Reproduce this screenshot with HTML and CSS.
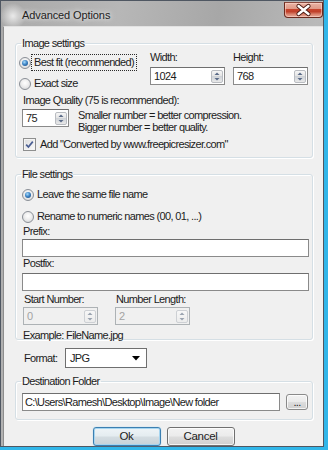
FILE: index.html
```html
<!DOCTYPE html>
<html>
<head>
<meta charset="utf-8">
<title>Advanced Options</title>
<link rel="stylesheet" href="styles.css">
</head>
<body>
<div class="window">
  <div class="titlebar">
    <span class="title">Advanced Options</span>
    <div class="close">
      <svg width="39" height="16" viewBox="0 0 39 16">
        <path d="M14.5 4 L24.5 12 M24.5 4 L14.5 12" stroke="#4a1a12" stroke-width="4.2" stroke-linecap="round"/>
        <path d="M14.5 4 L24.5 12 M24.5 4 L14.5 12" stroke="#ffffff" stroke-width="2.4" stroke-linecap="round"/>
      </svg>
    </div>
  </div>
  <div class="client">
    <fieldset class="group g1">
      <legend>Image settings</legend>
      <div class="size-row">
        <div class="radios">
          <div class="opt"><span class="radio checked"></span><span class="txt focus">Best fit (recommended)</span></div>
          <div class="opt"><span class="radio"></span><span class="txt">Exact size</span></div>
        </div>
        <div class="field">
          <div class="lbl">Width:</div>
          <div class="spin"><span class="val">1024</span><span class="spinbtn"><svg width="10" height="11" viewBox="0 0 10 11"><path d="M2.5 4 L5 1.5 L7.5 4Z" fill="#5a6b88"/><path d="M2.5 7 L5 9.5 L7.5 7Z" fill="#5a6b88"/></svg></span></div>
        </div>
        <div class="field">
          <div class="lbl">Height:</div>
          <div class="spin"><span class="val">768</span><span class="spinbtn"><svg width="10" height="11" viewBox="0 0 10 11"><path d="M2.5 4 L5 1.5 L7.5 4Z" fill="#5a6b88"/><path d="M2.5 7 L5 9.5 L7.5 7Z" fill="#5a6b88"/></svg></span></div>
        </div>
      </div>
      <div class="lbl quality-lbl">Image Quality (75 is recommended):</div>
      <div class="quality-row">
        <div class="spin quality"><span class="val">75</span><span class="spinbtn"><svg width="10" height="11" viewBox="0 0 10 11"><path d="M2.5 4 L5 1.5 L7.5 4Z" fill="#5a6b88"/><path d="M2.5 7 L5 9.5 L7.5 7Z" fill="#5a6b88"/></svg></span></div>
        <div class="hint">
          <div>Smaller number = better compression.</div>
          <div>Bigger number = better quality.</div>
        </div>
      </div>
      <div class="check-row">
        <span class="checkbox"><svg width="11" height="11" viewBox="0 0 11 11"><path d="M2.2 5.6 L4.4 8 L8.8 2.6" fill="none" stroke="#4a5e93" stroke-width="1.7"/></svg></span>
        <span>Add "Converted by www.freepicresizer.com"</span>
      </div>
    </fieldset>

    <fieldset class="group g2">
      <legend>File settings</legend>
      <div class="opt first"><span class="radio checked"></span><span class="txt">Leave the same file name</span></div>
      <div class="opt second"><span class="radio"></span><span class="txt">Rename to numeric names (00, 01, ...)</span></div>
      <div class="lbl">Prefix:</div>
      <div class="textbox prefix"></div>
      <div class="lbl">Postfix:</div>
      <div class="textbox postfix"></div>
      <div class="num-row">
        <div class="field">
          <div class="lbl">Start Number:</div>
          <div class="spin disabled"><span class="val">0</span><span class="spinbtn"><svg width="10" height="11" viewBox="0 0 10 11"><path d="M2.5 4 L5 1.5 L7.5 4Z" fill="#9aa3b0"/><path d="M2.5 7 L5 9.5 L7.5 7Z" fill="#9aa3b0"/></svg></span></div>
        </div>
        <div class="field">
          <div class="lbl">Number Length:</div>
          <div class="spin disabled"><span class="val">2</span><span class="spinbtn"><svg width="10" height="11" viewBox="0 0 10 11"><path d="M2.5 4 L5 1.5 L7.5 4Z" fill="#9aa3b0"/><path d="M2.5 7 L5 9.5 L7.5 7Z" fill="#9aa3b0"/></svg></span></div>
        </div>
      </div>
      <div class="example">Example: FileName.jpg</div>
    </fieldset>

    <div class="format-row">
      <span class="format-lbl">Format:</span>
      <div class="select"><span>JPG</span><svg width="8" height="5" viewBox="0 0 8 5"><path d="M0 0 L8 0 L4 4.5Z" fill="#000"/></svg></div>
    </div>

    <fieldset class="group g3">
      <legend>Destination Folder</legend>
      <div class="dest-row">
        <div class="textbox path">C:\Users\Ramesh\Desktop\Image\New folder</div>
        <div class="btn browse">...</div>
      </div>
    </fieldset>

    <div class="buttons">
      <div class="btn main default">Ok</div>
      <div class="btn main">Cancel</div>
    </div>
  </div>
</div>
</body>
</html>
```
FILE: styles.css
```css
* { box-sizing: border-box; }
html, body { margin: 0; padding: 0; }
body {
  width: 328px;
  height: 450px;
  overflow: hidden;
  background: #31b6e9;
  font-family: "Liberation Sans", Arial, sans-serif;
  font-size: 11px;
  line-height: 13px;
  letter-spacing: -0.65px;
  color: #1c1c1c;
}
.window {
  width: 324px;
  height: 447px;
  border: 1px solid #4f5762;
  padding-left: 2px;
  display: flex;
  flex-direction: column;
  background:
    radial-gradient(circle at 12px 15px, rgba(255,255,255,0.75), rgba(255,255,255,0) 13px),
    linear-gradient(100deg, #a9a9a9 0%, #b7b7b7 30%, #a7a7a7 55%, #b9b9b9 80%, #a6a6a6 100%);
}
.titlebar {
  height: 25px;
  flex: none;
  display: flex;
  justify-content: space-between;
  align-items: flex-start;
}
.title {
  margin: 8px 0 0 19px;
  font-size: 11px;
  letter-spacing: -0.1px;
  color: #222;
  text-shadow: 0 0 4px rgba(255,255,255,0.9), 0 0 8px rgba(255,255,255,0.6);
}
.close {
  width: 39px;
  height: 16px;
  margin-top: 1px;
  border: 1px solid #6b2a1e;
  border-top-color: #8a4a3e;
  border-radius: 0 0 4px 4px;
  background: linear-gradient(#eab3a4 0%, #e09a88 40%, #c8442c 45%, #c0402a 62%, #d9826d 80%, #e6a898 100%);
  box-shadow: inset 0 0 0 1px rgba(255,220,210,0.55);
  display: flex;
  align-items: center;
  justify-content: center;
  overflow: hidden;
}
.close svg { flex: none; }
.client {
  flex: 1;
  background: #f0f0f0;
  border-left: 1px solid #8d8d8d;
  border-top: 1px solid #e2e2e2;
  padding-top: 10px;
  display: flex;
  flex-direction: column;
}
.group {
  margin: 0 10px 0 11px;
  padding: 0 4px 6px 7px;
  border: 1px solid #d5dfe5;
  border-radius: 3px;
  box-shadow: inset 1px 1px 0 #fff, 1px 1px 0 #fff;
  min-width: 0;
}
.group legend {
  padding: 0 1px;
  margin-left: -2px;
  line-height: 13px;
}
.lbl { line-height: 13px; white-space: nowrap; }

/* radios */
.opt { display: flex; align-items: center; height: 17px; }
.radio {
  flex: none;
  width: 12px;
  height: 12px;
  border-radius: 50%;
  border: 1px solid #8a8f96;
  background: radial-gradient(circle at 50% 40%, #ffffff 0%, #f0f0f0 40%, #cfd1d4 100%);
  display: flex;
  align-items: center;
  justify-content: center;
}
.radio.checked::after {
  content: "";
  width: 6px;
  height: 6px;
  border-radius: 50%;
  background: radial-gradient(circle at 40% 35%, #a9dcfb 0%, #3f86c7 45%, #153f72 100%);
}
.txt {
  height: 17px;
  line-height: 15px;
  padding: 0 2px;
  border: 1px dotted transparent;
  white-space: nowrap;
}
.txt.focus { border-color: #2a2a2a; }

/* group 1 */
.size-row {
  display: grid;
  grid-template-columns: 1fr 75px 75px;
  column-gap: 8px;
}
.radios { padding-top: 4px; margin-left: -4px; display: flex; flex-direction: column; gap: 4px; }
.size-row .field { padding-top: 1px; }
.size-row .spin { margin-top: 3px; }

.spin {
  height: 18px;
  border: 1px solid #8a8a8a;
  border-top-color: #6e6e6e;
  background: #fff;
  display: flex;
  align-items: center;
  justify-content: space-between;
  padding: 0 1px 0 3px;
}
.spin .val { line-height: 13px; }
.spinbtn {
  flex: none;
  width: 12px;
  height: 13px;
  border: 1px solid #b9bcc1;
  border-radius: 2px;
  background: linear-gradient(#f6f6f6, #e3e3e3 48%, #cfd3d8 50%, #e9e9e9);
  display: flex;
  align-items: center;
  justify-content: center;
}
.spin.disabled { background: #f0f0f0; border-color: #adb2b5; color: #a3a3a3; }
.spin.disabled .spinbtn { border-color: #cdd0d4; background: linear-gradient(#f7f7f7, #ececec); }

.quality-lbl { margin-top: 2px; }
.quality-row { display: flex; margin-top: 2px; }
.spin.quality { width: 47px; margin-left: -1px; flex: none; }
.hint { margin-left: 9px; line-height: 12px; }
.check-row { display: flex; align-items: center; margin-top: 5px; height: 13px; }
.checkbox {
  flex: none;
  width: 13px;
  height: 13px;
  border: 1px solid #8e8f8f;
  background: linear-gradient(135deg, #dcdcdc, #fbfbfb);
  box-shadow: inset 0 0 0 1px #f4f4f4;
  margin-right: 4px;
  display: flex;
  align-items: center;
  justify-content: center;
}

/* group 2 */
.g2 { margin-top: 10px; padding-right: 3px; padding-bottom: 0; }
.g2 .opt { margin-left: -1px; margin-top: 5px; }
.textbox {
  height: 18px;
  border: 1px solid #8a8a8a;
  border-top-color: #6e6e6e;
  background: #fff;
  margin-left: -1px;
}
.prefix { margin-top: 1px; }
.postfix { margin-top: 3px; }
.num-row {
  display: grid;
  grid-template-columns: 75px 75px;
  column-gap: 17px;
  margin-top: 2px;
}
.num-row .lbl { padding-left: 1px; }
.num-row .spin { margin-top: 1px; }
.example { margin-top: 4px; margin-bottom: -3px; line-height: 13px; }

/* format */
.format-row { display: flex; align-items: center; margin: 8px 0 0 20px; height: 20px; }
.format-lbl { width: 41px; flex: none; }
.select {
  width: 82px;
  height: 20px;
  border: 1px solid #6f6f6f;
  background: #fff;
  display: flex;
  align-items: center;
  justify-content: space-between;
  padding: 0 6px 0 4px;
}

/* destination */
.g3 { margin-top: 7px; padding-bottom: 8px; }
.dest-row { display: flex; align-items: center; margin-top: 5px; }
.path {
  width: 258px;
  flex: none;
  line-height: 16px;
  padding-left: 2px;
  white-space: nowrap;
  overflow: hidden;
}
.btn {
  border: 1px solid #707070;
  border-radius: 3px;
  background: linear-gradient(#f2f2f2 0%, #ebebeb 48%, #dddddd 52%, #cfcfcf 100%);
  box-shadow: inset 0 0 0 1px rgba(255,255,255,0.75);
  display: flex;
  align-items: center;
  justify-content: center;
  color: #1c1c1c;
}
.browse {
  width: 22px;
  height: 16px;
  margin-left: 6px;
  line-height: 10px;
  align-items: flex-end;
  padding-bottom: 2px;
  border-color: #8a8a8a;
}
.buttons {
  display: flex;
  justify-content: center;
  gap: 6px;
  margin-top: 7px;
}
.btn.main { width: 68px; height: 19px; font-size: 11.5px; letter-spacing: -0.3px; }
.btn.default {
  border-color: #3c7fb1;
  box-shadow: inset 0 0 0 1px #a6d5f0, 0 0 1px #6cc2ee;
  background: linear-gradient(#eef4f7 0%, #e4ecf0 48%, #d4dde2 52%, #c8d2d8 100%);
}
```
